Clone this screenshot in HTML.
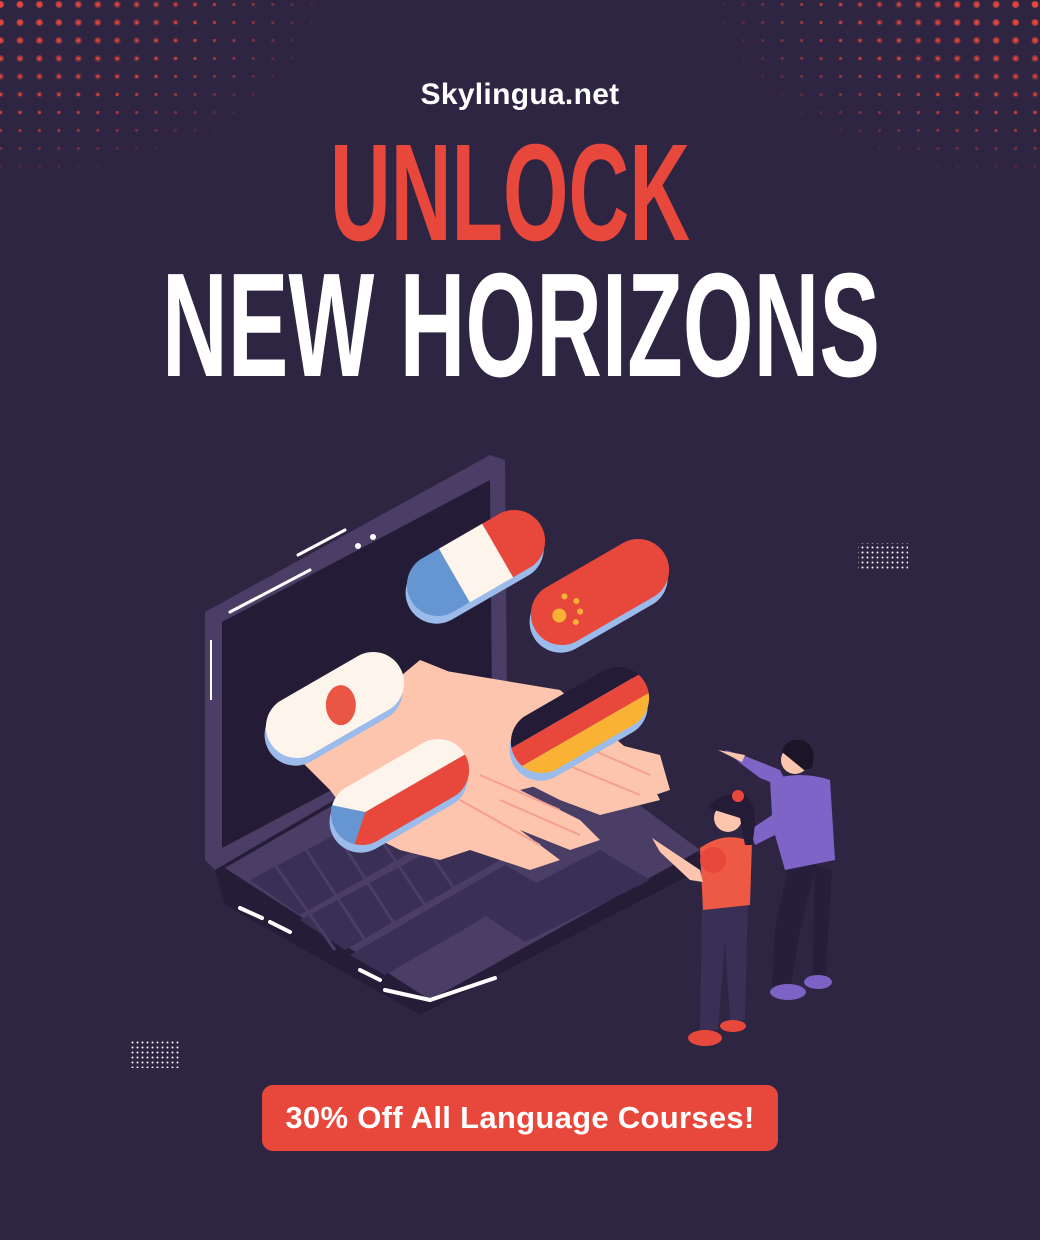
<!DOCTYPE html>
<html><head><meta charset="utf-8">
<style>
html,body{margin:0;padding:0}
body{width:1040px;height:1240px;background:#2e2542;position:relative;overflow:hidden;font-family:"Liberation Sans",sans-serif}
.t{position:absolute;left:520px;font-weight:bold;white-space:nowrap}
.site{top:78px;font-size:30px;color:#fff;letter-spacing:0.3px;transform:translateX(-50%)}
.u{top:124px;font-size:138px;color:#e8483b;transform:translateX(-50%) scaleX(0.61);line-height:138px;margin-left:-10px}
.n{top:252px;font-size:148px;color:#fff;transform:translateX(-50%) scaleX(0.615);line-height:148px;margin-left:1px}
.btn{position:absolute;left:262px;top:1085px;width:516px;height:66px;background:#e8483b;border-radius:11px;color:#fff;font-weight:bold;font-size:31px;line-height:66px;text-align:center;letter-spacing:0.3px}
svg{position:absolute;left:0;top:0}
</style></head><body>
<svg width="1040" height="1240" viewBox="0 0 1040 1240">
<defs>
<pattern id="pd" x="-9.2" y="-4.5" width="19.45" height="18" patternUnits="userSpaceOnUse"><circle cx="9.725" cy="9" r="1.6" fill="#e8483b"/></pattern>
<pattern id="pdb" x="-9.2" y="-4.5" width="19.45" height="18" patternUnits="userSpaceOnUse"><circle cx="9.725" cy="9" r="3.4" fill="#e8483b"/></pattern>
<pattern id="pr" x="1025.3" y="-4.5" width="19.45" height="18" patternUnits="userSpaceOnUse"><circle cx="9.725" cy="9" r="1.6" fill="#e8483b"/></pattern>
<pattern id="prb" x="1025.3" y="-4.5" width="19.45" height="18" patternUnits="userSpaceOnUse"><circle cx="9.725" cy="9" r="3.4" fill="#e8483b"/></pattern>
<pattern id="pw" x="0" y="0" width="5" height="5" patternUnits="userSpaceOnUse"><circle cx="2.5" cy="2.5" r="1" fill="#fff"/></pattern>
<radialGradient id="gl" gradientUnits="userSpaceOnUse" cx="0" cy="0" r="330" gradientTransform="scale(1,0.55)"><stop offset="0" stop-color="#fff"/><stop offset="0.6" stop-color="#fff" stop-opacity="0.85"/><stop offset="1" stop-color="#fff" stop-opacity="0"/></radialGradient>
<radialGradient id="glb" gradientUnits="userSpaceOnUse" cx="0" cy="0" r="220" gradientTransform="scale(1,0.55)"><stop offset="0" stop-color="#fff"/><stop offset="1" stop-color="#fff" stop-opacity="0"/></radialGradient>
<radialGradient id="gr" gradientUnits="userSpaceOnUse" cx="1040" cy="0" r="330" gradientTransform="translate(1040,0) scale(1,0.55) translate(-1040,0)"><stop offset="0" stop-color="#fff"/><stop offset="0.6" stop-color="#fff" stop-opacity="0.85"/><stop offset="1" stop-color="#fff" stop-opacity="0"/></radialGradient>
<radialGradient id="grb" gradientUnits="userSpaceOnUse" cx="1040" cy="0" r="220" gradientTransform="translate(1040,0) scale(1,0.55) translate(-1040,0)"><stop offset="0" stop-color="#fff"/><stop offset="1" stop-color="#fff" stop-opacity="0"/></radialGradient>
<mask id="ml"><rect x="0" y="0" width="330" height="175" fill="url(#gl)"/></mask>
<mask id="mlb"><rect x="0" y="0" width="330" height="175" fill="url(#glb)"/></mask>
<mask id="mr"><rect x="710" y="0" width="330" height="175" fill="url(#gr)"/></mask>
<mask id="mrb"><rect x="710" y="0" width="330" height="175" fill="url(#grb)"/></mask>
<clipPath id="pill"><rect x="-75" y="-31" width="150" height="62" rx="31"/></clipPath>
</defs>
<rect x="0" y="0" width="330" height="175" fill="url(#pd)" mask="url(#ml)"/>
<rect x="0" y="0" width="330" height="175" fill="url(#pdb)" mask="url(#mlb)"/>
<rect x="710" y="0" width="330" height="175" fill="url(#pr)" mask="url(#mr)"/>
<rect x="710" y="0" width="330" height="175" fill="url(#prb)" mask="url(#mrb)"/>
<rect x="858" y="543" width="50" height="27" fill="url(#pw)"/>
<rect x="131" y="1041" width="50" height="27" fill="url(#pw)"/>

<!-- laptop -->
<polygon points="205,612 490,455 505,460 507,700 215,870 205,860" fill="#4a3d66"/>
<polygon points="222,622 490,480 492,705 222,848" fill="#241b36"/>
<path d="M230,612 L310,570 M298,555 L345,530" stroke="#fff" stroke-width="3" stroke-linecap="round" fill="none"/>
<circle cx="358" cy="546" r="3" fill="#fff"/><circle cx="373" cy="537" r="3" fill="#fff"/>
<path d="M211,640 L211,700" stroke="#fff" stroke-width="2"/>
<polygon points="215,870 225,905 420,1015 700,870 700,855 505,700" fill="#251d38"/>
<polygon points="225,868 505,705 700,850 430,1000" fill="#4a3d66"/>
<path d="M240,908 L262,918 M270,922 L290,932 M360,970 L380,980 M385,990 L430,1000 L495,978" stroke="#fff" stroke-width="4" stroke-linecap="round" fill="none"/>
<g fill="#3a2f55">
<polygon points="250,880 400,800 450,830 300,915"/>
<polygon points="300,920 460,835 500,860 345,950"/>
<polygon points="350,955 505,865 540,885 385,975"/>
<polygon points="480,912 600,850 650,880 525,942"/>
</g>
<g stroke="#4a3d66" stroke-width="3">
<path d="M275,865 L335,950 M305,848 L365,940 M335,832 L395,925 M365,816 L425,905 M395,800 L455,890"/>
</g>

<!-- hands -->
<g fill="#fdc5ad">
<polygon points="300,760 420,660 470,680 560,690 600,740 660,755 670,790 640,800 600,790 560,780 520,790 580,820 600,840 570,850 520,830 560,860 530,870 470,850 440,860 400,850 360,830 330,790"/>
<polygon points="395,715 440,670 560,690 640,760 660,800 600,815 560,800 500,770"/>
</g>
<g stroke="#f3a091" stroke-width="2" fill="none">
<path d="M480,775 L560,810 M500,800 L580,835 M460,800 L540,845 M555,760 L640,795 M570,740 L650,775"/>
</g>

<!-- pills -->
<g transform="translate(476,563) rotate(-30)">
<rect x="-80" y="-25" width="150" height="62" rx="31" fill="#9bbbea"/>
<g clip-path="url(#pill)"><rect x="-75" y="-31" width="50" height="62" fill="#6596d2"/><rect x="-25" y="-31" width="50" height="62" fill="#fdf4ec"/><rect x="25" y="-31" width="50" height="62" fill="#e8483b"/></g>
</g>
<g transform="translate(600,592) rotate(-30)">
<rect x="-80" y="-25" width="150" height="62" rx="31" fill="#9bbbea"/>
<g clip-path="url(#pill)"><rect x="-75" y="-31" width="150" height="62" fill="#e8483b"/></g>
<g fill="#f9b233"><circle cx="-47" cy="0" r="7"/><circle cx="-33" cy="-14" r="3"/><circle cx="-25" cy="-4" r="3"/><circle cx="-27" cy="7" r="3"/><circle cx="-36" cy="14" r="3"/></g>
</g>
<g transform="translate(335,705) rotate(-30)">
<rect x="-80" y="-25" width="150" height="62" rx="31" fill="#9bbbea"/>
<g clip-path="url(#pill)"><rect x="-75" y="-31" width="150" height="62" fill="#fdf4ec"/></g>
<ellipse cx="5" cy="3" rx="15" ry="20" transform="rotate(30 5 3)" fill="#ea5544"/>
</g>
<g transform="translate(580,720) rotate(-30)">
<rect x="-80" y="-25" width="150" height="62" rx="31" fill="#9bbbea"/>
<g clip-path="url(#pill)"><rect x="-75" y="-31" width="150" height="21" fill="#241b36"/><rect x="-75" y="-10" width="150" height="21" fill="#e8483b"/><rect x="-75" y="11" width="150" height="20" fill="#f9b233"/></g>
</g>
<g transform="translate(400,792) rotate(-30)">
<rect x="-80" y="-25" width="150" height="62" rx="31" fill="#9bbbea"/>
<g clip-path="url(#pill)"><rect x="-75" y="-31" width="150" height="31" fill="#fdf4ec"/><rect x="-75" y="0" width="150" height="31" fill="#e8483b"/><polygon points="-75,-31 -40,0 -75,31" fill="#6596d2"/></g>
</g>

<!-- man -->
<g>
<path d="M790,858 L775,930 L772,990 L790,990 L800,930 L815,870 L812,990 L825,985 L832,870 Z" fill="#271e3c"/>
<ellipse cx="788" cy="992" rx="18" ry="8" fill="#7b62c4"/>
<ellipse cx="818" cy="982" rx="14" ry="7" fill="#7b62c4"/>
<path d="M770,780 Q800,770 830,780 L835,860 L785,870 L775,835 L755,845 L750,830 L772,815 Z" fill="#7e64c6"/>
<path d="M725,750 L745,756 L780,770 L790,790 L760,778 L740,763 Z" fill="#7e64c6"/>
<path d="M718,750 L745,755 L742,762 Z" fill="#fdc5ad"/>
<circle cx="795" cy="760" r="14" fill="#fdc5ad"/>
<path d="M782,752 Q785,738 802,740 Q818,746 812,768 L804,770 Z" fill="#1c1528"/>
</g>
<!-- woman -->
<g>
<path d="M702,905 L700,1030 L718,1030 L725,940 L730,1020 L745,1020 L748,900 Z" fill="#3a2f55"/>
<ellipse cx="705" cy="1038" rx="17" ry="8" fill="#e8483b"/>
<ellipse cx="733" cy="1026" rx="13" ry="6" fill="#e8483b"/>
<path d="M700,848 Q725,830 752,842 L750,905 L703,910 Z" fill="#ee5945"/>
<circle cx="713" cy="860" r="13" fill="#e8483b"/>
<path d="M652,838 L700,870 L703,882 L690,880 L660,852 Z" fill="#fdc5ad"/>
<circle cx="728" cy="818" r="14" fill="#fdc5ad"/>
<path d="M708,808 Q720,790 745,795 Q760,805 752,845 L745,845 L740,818 Z" fill="#241b36"/>
<circle cx="738" cy="796" r="6" fill="#e8483b"/>
</g>
</svg>
<div class="t site">Skylingua.net</div>
<div class="t u">UNLOCK</div>
<div class="t n">NEW HORIZONS</div>
<div class="btn">30% Off All Language Courses!</div>
</body></html>
